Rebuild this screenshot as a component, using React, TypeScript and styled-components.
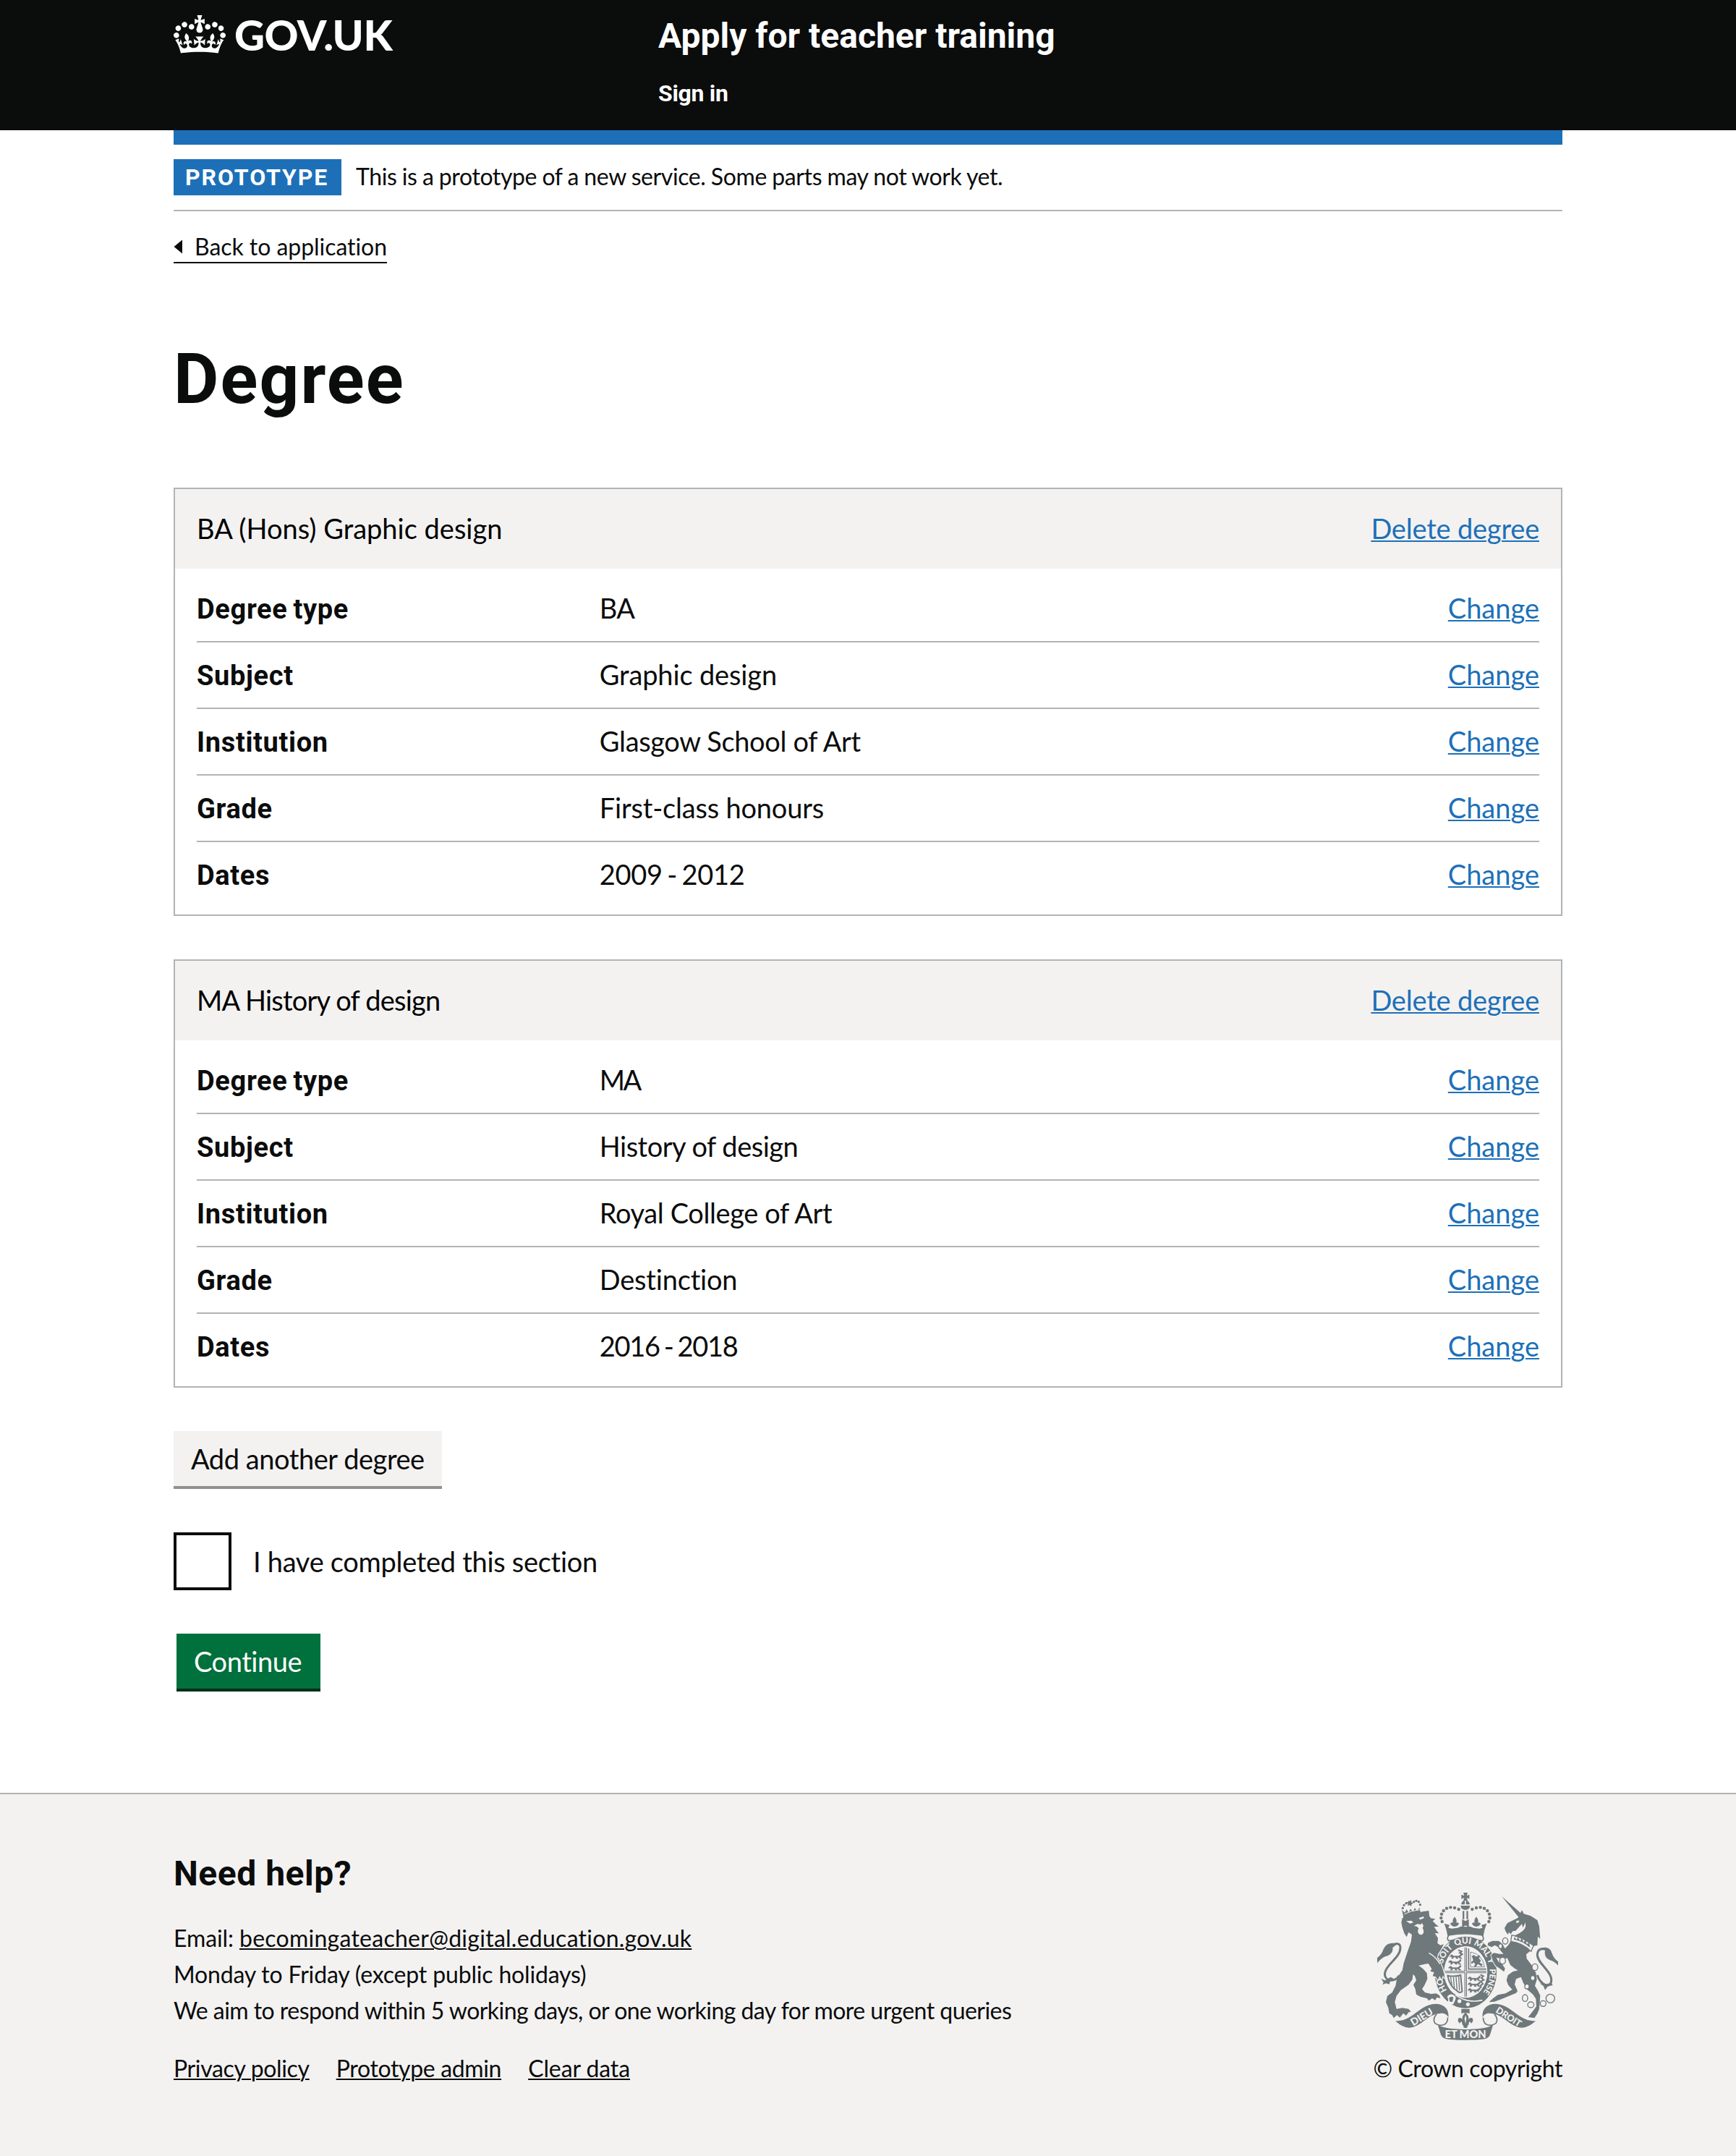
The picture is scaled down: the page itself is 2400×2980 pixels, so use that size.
import React from 'react';
import styled, { createGlobalStyle } from 'styled-components';

const BLACK = '#0b0c0c';
const BLUE = '#1d70b8';
const BORDER = '#b1b4b6';
const LIGHT = '#f3f2f1';
const CREST = '#6f787a';

const BODY_FONT = 'Lato, "Open Sans", sans-serif';
const BOLD_FONT = 'Roboto, "Liberation Sans", sans-serif';

const GlobalStyle = createGlobalStyle`
  *, *::before, *::after { box-sizing: border-box; }
  body {
    margin: 0;
    background: #fff;
    color: ${BLACK};
    font-family: ${BODY_FONT};
    font-size: 38px;
    line-height: 50px;
    letter-spacing: -0.3px;
    font-variant-ligatures: none;
  }
  h1, h2, p, dl, dt, dd { margin: 0; }
`;

const Page = styled.div`
  display: flex;
  flex-direction: column;
  min-height: 2980px;
`;

const Container = styled.div`
  width: 1920px;
  margin: 0 auto;
`;

const Tracked = styled.span<{ $track: number; $word?: number }>`
  letter-spacing: ${(p) => p.$track}px;
  word-spacing: ${(p) => p.$word ?? 0}px;
`;

/* Header */

const Header = styled.header`
  height: 180px;
  background: ${BLACK};
  color: #fff;
`;

const HeaderInner = styled(Container)`
  display: grid;
  grid-template-columns: 670px 1fr;
`;

const Logo = styled.a`
  display: flex;
  align-items: flex-start;
  gap: 12px;
  padding-top: 21px;
`;

const Wordmark = styled.span`
  margin-top: -2px;
  font-size: 58px;
  font-weight: 900;
  line-height: 58px;
  letter-spacing: -0.4px;
`;

const ServiceName = styled.div`
  margin-top: 20px;
  font: 700 48px/60px ${BOLD_FONT};
  letter-spacing: 0;
`;

const HeaderLink = styled.a`
  display: block;
  margin-top: 29px;
  font: 700 32px/40px ${BOLD_FONT};
  letter-spacing: -0.3px;
`;

const BlueBar = styled.div`
  height: 20px;
  background: ${BLUE};
`;

const PhaseBanner = styled.div`
  display: flex;
  align-items: flex-start;
  gap: 20px;
  height: 92px;
  padding: 20px 0;
  border-bottom: 2px solid ${BORDER};
`;

const Tag = styled.strong`
  width: 232px;
  height: 50px;
  padding-left: 16px;
  background: ${BLUE};
  color: #fff;
  font: 700 32px/50px ${BOLD_FONT};
  letter-spacing: 1.9px;
`;

const PhaseText = styled.span`
  font-size: 32px;
  line-height: 48px;
  letter-spacing: -0.4px;
  word-spacing: -0.4px;
`;

const BackLink = styled.a`
  display: flex;
  align-items: center;
  gap: 15px;
  width: 295px;
  height: 44px;
  margin-top: 28px;
  border-bottom: 2px solid ${BLACK};
  font-size: 32px;
  line-height: 40px;
  letter-spacing: -0.05px;
  white-space: nowrap;
`;

/* Main */

const Heading = styled.h1`
  margin: 110px 0 100px;
  font: 700 96px/100px ${BOLD_FONT};
  letter-spacing: 2.1px;
`;

const Card = styled.section`
  margin-bottom: 60px;
  border: 2px solid ${BORDER};
`;

const CardHeader = styled.header`
  display: flex;
  justify-content: space-between;
  height: 110px;
  padding: 29px 30px 0;
  background: ${LIGHT};
  color: #000;
`;

const Rows = styled.dl`
  padding: 10px 30px;
`;

const Row = styled.div`
  display: grid;
  grid-template-columns: 30% 50% 20%;
  align-items: baseline;
  height: 92px;
  padding-top: 19px;
  border-bottom: 2px solid ${BORDER};

  &:last-child {
    height: 90px;
    border-bottom: 0;
  }
`;

const Key = styled.dt`
  font-family: ${BOLD_FONT};
  font-weight: 700;
  letter-spacing: 0.65px;
  word-spacing: -2px;
`;

const Actions = styled.dd`
  text-align: right;
`;

const Link = styled.a<{ $track?: number; $dark?: boolean }>`
  color: ${(p) => (p.$dark ? BLACK : BLUE)};
  letter-spacing: ${(p) => p.$track ?? 0}px;
  text-decoration: underline;
  text-decoration-thickness: 2.4px;
  text-underline-offset: 2px;
`;

const Button = styled.button<{ $primary?: boolean }>`
  display: block;
  width: ${(p) => (p.$primary ? 199 : 371)}px;
  height: 76px;
  margin: 0 0 0 ${(p) => (p.$primary ? 4 : 0)}px;
  padding: 15px 0 15px 24px;
  border: 0;
  background: ${(p) => (p.$primary ? '#00703c' : LIGHT)};
  box-shadow: 0 4px 0 ${(p) => (p.$primary ? '#002d18' : '#929191')};
  color: ${(p) => (p.$primary ? '#fff' : BLACK)};
  font: 400 38px/46px ${BODY_FONT};
  letter-spacing: -0.45px;
  text-align: left;
  white-space: nowrap;
`;

const CheckboxRow = styled.label`
  display: flex;
  gap: 30px;
  margin: 64px 0 60px;
  letter-spacing: -0.3px;
`;

const Checkbox = styled.input`
  appearance: none;
  width: 80px;
  height: 80px;
  margin: 0;
  border: 4px solid ${BLACK};
  background: #fff;
`;

const CheckboxText = styled.span`
  padding-top: 15px;
`;

/* Footer */

const Footer = styled.footer`
  flex: 1;
  margin-top: 144px;
  padding-top: 80px;
  border-top: 2px solid ${BORDER};
  background: ${LIGHT};
  font-size: 32px;
`;

const FooterInner = styled(Container)`
  display: flex;
  justify-content: space-between;
  align-items: flex-end;
`;

const HelpTitle = styled.h2`
  margin-bottom: 34px;
  font: 700 48px/60px ${BOLD_FONT};
  letter-spacing: 0.5px;
`;

const HelpLine = styled.p<{ $track: number }>`
  letter-spacing: ${(p) => p.$track}px;
`;

const FooterLinks = styled.nav`
  display: flex;
  gap: 37px;
  margin-top: 30px;
`;

const Copyright = styled.div`
  display: flex;
  flex-direction: column;
  align-items: center;
  gap: 14px;
`;

/* Drawings */

const Crown = () => (
  <svg width="72" height="53" viewBox="0 0 132 97" fill="#fff" aria-hidden="true">
    <path
      fillRule="evenodd"
      d="M25 30.2c3.5 1.5 7.7-.2 9.1-3.7 1.5-3.6-.2-7.8-3.9-9.2-3.6-1.4-7.6.3-9.1 3.9-1.4 3.5.3 7.5 3.9 9zM9 39.5c3.6 1.5 7.8-.2 9.2-3.7 1.5-3.6-.2-7.8-3.9-9.1-3.6-1.5-7.6.2-9.1 3.8-1.4 3.5.3 7.5 3.8 9zM4.4 57.2c3.5 1.5 7.7-.2 9.1-3.8 1.5-3.6-.2-7.7-3.9-9.1-3.5-1.5-7.6.3-9.1 3.8-1.4 3.5.3 7.6 3.9 9.1zm38.3-21.4c3.5 1.5 7.7-.2 9.1-3.8 1.5-3.6-.2-7.7-3.9-9.1-3.6-1.5-7.6.3-9.1 3.8-1.3 3.6.4 7.7 3.9 9.1zm64.4-5.6c-3.6 1.5-7.8-.2-9.1-3.7-1.5-3.6.2-7.8 3.8-9.2 3.6-1.4 7.7.3 9.2 3.9 1.3 3.5-.4 7.5-3.9 9zm15.9 9.3c-3.6 1.5-7.7-.2-9.1-3.7-1.5-3.6.2-7.8 3.7-9.1 3.6-1.5 7.7.2 9.2 3.8 1.5 3.5-.3 7.5-3.8 9zm4.7 17.7c-3.6 1.5-7.8-.2-9.2-3.8-1.5-3.6.2-7.7 3.9-9.1 3.6-1.5 7.7.3 9.2 3.8 1.3 3.5-.4 7.6-3.9 9.1zM89.3 35.8c-3.6 1.5-7.8-.2-9.2-3.8-1.4-3.6.2-7.7 3.9-9.1 3.6-1.5 7.7.3 9.2 3.8 1.4 3.6-.3 7.7-3.9 9.1zM69.7 17.7l8.9 4.7V9.3l-8.9 2.8c-.2-.3-.5-.6-.9-.9L72.4 0H59.6l3.5 11.2c-.3.3-.6.5-.9.9l-8.8-2.8v13.1l8.8-4.7c.3.3.6.7.9.9l-5 15.4v.1c-.2.8-.4 1.6-.4 2.4 0 4.1 3.1 7.5 7 8.1h.2c.3 0 .7.1 1 .1.4 0 .7 0 1-.1h.2c4-.6 7.1-4.1 7.1-8.1 0-.8-.1-1.7-.4-2.4V34l-5.1-15.4c.4-.2.7-.6 1-.9zM66 92.8c16.9 0 32.8 1.1 47.1 3.2 4-16.9 8.9-26.7 14-33.5l-9.6-3.4c1 4.9 1.1 7.2 0 10.2-1.5-1.4-3-4.3-4.2-8.7L108.6 76c2.8-2 5-3.2 7.5-3.3-4.4 9.4-10 11.9-13.6 11.2-4.3-.8-6.3-4.6-5.6-7.9 1-4.7 5.7-5.9 8-.5 4.3-8.7-3-11.4-7.6-8.8 7.1-7.2 7.9-13.5 2.1-21.1-8 6.1-8.1 12.3-4.5 20.8-4.7-5.4-12.1-2.5-9.5 6.2 3.4-5.2 7.9-2 7.2 3.1-.6 4.3-6.4 7.8-13.5 7.2-10.3-.9-10.9-8-11.2-13.8 2.5-.5 7.1 1.8 11 7.3L80.2 60c-4.1 4.4-8 5.3-12.3 5.4 1.4-4.4 8-11.6 8-11.6H55.5s6.4 7.2 7.9 11.6c-4.2-.1-8-1-12.3-5.4l1.4 16.4c3.9-5.5 8.5-7.7 10.9-7.3-.3 5.8-.9 12.8-11.1 13.8-7.2.6-12.9-2.9-13.5-7.2-.7-5 3.8-8.3 7.1-3.1 2.7-8.7-4.6-11.6-9.4-6.2 3.7-8.5 3.6-14.7-4.6-20.8-5.8 7.6-5 13.9 2.2 21.1-4.7-2.6-11.9.1-7.7 8.8 2.3-5.5 7.1-4.2 8.1.5.7 3.3-1.3 7.1-5.7 7.9-3.5.7-9-1.8-13.5-11.2 2.5.1 4.7 1.3 7.5 3.3l-4.7-15.4c-1.2 4.4-2.7 7.2-4.3 8.7-1.1-3-.9-5.3 0-10.2l-9.5 3.4c5 6.9 9.9 16.7 14 33.5 14.8-2.1 30.8-3.2 47.7-3.2z"
    />
  </svg>
);

const BackArrow = () => (
  <svg width="14" height="20" viewBox="0 0 14 20" fill={BLACK} aria-hidden="true">
    <path d="M0.500 10 12 0.500V19.500z" />
  </svg>
);

const Lion = ({ x, y }: { x: number; y: number }) => (
  <path
    transform={`translate(${x} ${y})`}
    d="M0 8 5 2l7 0 3 5h22l8-5 3-5 4 2-2 6-6 4 2 5 6 3h-9l-5-6h-5l2 6h-7l-3-6h-8l-3 6H8l2-5-3-4-5 2z"
    stroke={CREST}
    strokeWidth="2"
  />
);

const PEARLS: [number, number][] = [
  [470, 177], [453, 171], [436, 169], [420, 173], [407, 183], [399, 197], [397, 213], [401, 228],
];

const HalfCrown = () => (
  <>
    {PEARLS.map(([x, y]) => <circle key={`${x}-${y}`} cx={x} cy={y} r="6.6" />)}
    <path d="M453 208q11 14 7 25 8-4 11 4-5 10-18 12-13-2-18-12 3-8 11-4-4-11 7-25z" />
    <path d="M410 236l22 6-5 12 14 3 24-3 14-6 20 2v26q-41 0-75 12-4-28-14-52z" />
  </>
);

const Ribbon = () => (
  <>
    <path d="M207 640q35 2 68-21c28-20 60-50 98-50 40 0 58 26 54 56-6-14-22-20-42-15-46 6-76 58-122 58q-28-2-56-28z" />
    <path d="M378 612q-18 20-6 38 20 14 40 4 14-10 12-28" fill="none" stroke={CREST} strokeWidth="5" />
    <path d="M382 652q14 22 117 23v44q-63 0-86-6-13-4-17-16z" />
  </>
);

const RoyalArms = () => (
  <svg width="250" height="204" viewBox="132 108 750 612" fill={CREST} role="img" aria-label="Royal coat of arms">
    <defs>
      <path id="garter" d="M499 557a100 119 0 0 1 0-238a100 119 0 0 1 0 238" />
      <clipPath id="shield"><ellipse cx="499" cy="437" rx="86" ry="102" /></clipPath>
    </defs>

    {/* crown */}
    <path d="M489 108h18l-4 13 11-5v18l-11-5 4 12h-18l4-12-12 5v-18l12 5zM480 157q3-16 15-17v17zM500 140q14 2 16 17h-16zM478 162h39q0 16-19 18-20-2-20-18z" />
    <path d="M486 184h7v34h-7zM502 184h7v34h-7z" />
    <path d="M484 218l14 8 14-8v34l-14-8-14 8z" />
    <HalfCrown />
    <g transform="translate(996 0) scale(-1 1)"><HalfCrown /></g>
    <path d="M430 284q68-12 136 0 12 12 2 24-70-16-140 0-10-12 2-24z" fill={LIGHT} stroke={CREST} strokeWidth="5" />

    {/* garter */}
    <path fillRule="evenodd" d="M499 290a128 148 0 0 1 0 297a128 148 0 0 1 0-297zM499 330a90 107 0 0 0 0 214a90 107 0 0 0 0-214z" />
    <g fill={LIGHT} fontFamily="Lato, sans-serif" fontWeight="900" fontSize="36" letterSpacing="-0.500" textAnchor="middle">
      <text><textPath href="#garter" startOffset="17.500%">HO</textPath></text>
      <text><textPath href="#garter" startOffset="36%">SOIT</textPath></text>
      <text><textPath href="#garter" startOffset="48.300%">QUI</textPath></text>
      <text><textPath href="#garter" startOffset="60.200%">MAL</textPath></text>
      <text><textPath href="#garter" startOffset="68.500%">Y</textPath></text>
      <text fontSize="34"><textPath href="#garter" startOffset="80.500%">PENSE</textPath></text>
    </g>
    <path d="M422 540q10-16 26-8 14 8 8 20l-8 18q-18 6-24-8 6-10-2-22z" fill={LIGHT} />
    <path d="M430 544q12-10 18 0l-4 16q-10 4-12-4z" />
    <circle cx="473" cy="558" r="8" fill={LIGHT} />
    <circle cx="508" cy="571" r="8" fill={LIGHT} />
    <path d="M456 532q50 36 112 22" fill="none" stroke={LIGHT} strokeWidth="5" />

    {/* shield */}
    <g clipPath="url(#shield)">
      <Lion x={432} y={364} /><Lion x={428} y={388} /><Lion x={428} y={412} />
      <Lion x={508} y={456} /><Lion x={508} y={480} /><Lion x={508} y={504} />
      <path d="M560 448l12 6-8 8 10 8-12 6 8 10-10 8 4 10M468 346l14 6-8 6 14 6" fill="none" stroke={CREST} strokeWidth="6" />
      <path d="M511 340v85h76" fill="none" stroke={CREST} strokeWidth="5" />
      <path d="M519 354q50 10 58 62h-58z" fill="none" stroke={CREST} strokeWidth="2.500" />
      <path d="M524 372l8-6 8 6 9 0 4-6 6 6-5 8 8 10-5 8 12 8-4 8-12-8-6 0-4 8-10 0 5-9-5-8-8 6-4-6 9-8-2-8z" />
      <path d="M424 452q30 6 54-2l6 68q-10 8-20-2-32-18-40-64z" fill="none" stroke={CREST} strokeWidth="6" />
      <path d="M436 458l6 34M448 459l4 46M459 458l4 54M470 456l3 58" fill="none" stroke={CREST} strokeWidth="4" />
      <path d="M499 330v214M406 437h186" stroke={CREST} strokeWidth="10" />
      <path d="M499 330v214M406 437h186" stroke={LIGHT} strokeWidth="3" />
    </g>

    {/* lion */}
    <g stroke={LIGHT} strokeWidth="7" strokeLinejoin="round" paintOrder="stroke">
      <path d="M232 232L236 214 268 200 322 186 346 183 348 204 354 214 373 217 362 226 376 240 387 248 368 250 380 268 388 277 371 276 384 296 382 318 394 326 408 322 396 344 384 362 380 378 392 396 402 420 410 446 412 462 404 452 400 468 390 454 384 470 374 456 362 454 368 438 352 434 358 424 344 402 330 404 304 410 322 424 338 442 340 466 328 492 318 508 330 522 356 528 376 526 390 534 394 546 380 542 372 554 360 546 346 556 338 546 312 540 294 530 290 508 282 490 294 472 288 454 280 447 278 468 262 490 230 512 212 536 205 562 212 590 236 586 262 590 272 602 262 604 252 618 240 608 226 626 214 616 200 628 194 616 182 608 178 586 168 562 174 536 194 522 208 494 214 462 236 430 242 400 258 352 272 312 276 282 262 272 254 292 244 276 236 252z" />
    </g>
    <path d="M252 226l22-2 8 8-14 4zM304 214l20-8 2 8-16 6zM284 246l14-8 14 2 6-6 6 12-4 8q8 14 2 24-8 8-16 2-10-8-2-24l-8-8z" fill={LIGHT} />
    <path d="M346 358q30 16 46 46" fill="none" stroke={LIGHT} strokeWidth="4" />
    <path d="M240 205l-6-26 12 12 8-14 8 14 8-16 10 12 8-16 8 12 12-12 4 22q-34 2-72 22zM260 140l6 4 6-6 2 10 8 4-8 4 0 8-8-4-8 2 2-8-6-6 8-2z" />
    {[[238, 172], [243, 160], [252, 152], [284, 146], [294, 142], [304, 146], [310, 158]].map(([x, y]) => (
      <circle key={x} cx={x} cy={y} r="5" />
    ))}
    <path d="M244 197q30-16 66-18" fill="none" stroke={LIGHT} strokeWidth="3" />
    <path d="M222 452c-16 32-64 22-58-12 6-36 64-62 64-104 0-20-18-20-36-8" fill="none" stroke={CREST} strokeWidth="9" />
    <path d="M216 320q-44-10-58 22-8 24-26 36v22q20-26 44-30 24-12 20-34zM148 464l16 8 24-14 14 8-16 8-4 14-14-4-14 6 4-10z" />

    {/* unicorn */}
    <path d="M648 123l86 76-16 10z" />
    <path d="M716 212l16-32 8 16 28 8 28 18 8 26 4 52-10-10-2 36-16 4-80-46 26-10 10-22-4-14-26 28-12 2-8 12-8-8-4 10-10-14-4-14 12-20z" />
    <path d="M710 224l12 0-4 8-10 2z" fill={LIGHT} />
    <path d="M746 232q6 22-10 34t-30 18l-6-2q36-16 46-50z" fill={LIGHT} />
    <g stroke={LIGHT} strokeWidth="6" strokeLinejoin="round" paintOrder="stroke">
      <path d="M688 305L676 325 662 340 652 322 636 308 610 308 592 316 590 326 606 334 620 326 634 334 646 352 656 362 640 362 616 358 604 366 612 392 624 412 642 424 658 436 662 422 650 404 636 396 626 378 650 382 672 380 684 408 704 424 716 430 694 436 674 450 668 472 676 492 692 510 664 526 632 532 610 548 596 562 618 560 650 548 708 524 714 516 702 488 708 466 728 458 738 482 752 508 778 530 790 548 792 580 774 604 758 624 784 628 796 610 804 590 808 535 798 514 786 494 794 468 790 440 772 408 752 382 750 364 766 350 772 338z" />
    </g>
    <path d="M690 284q50 12 90 44l-10 24q-34-36-84-42z" fill={LIGHT} stroke={CREST} strokeWidth="4" />
    <path d="M698 302l4-10 8 12 6-12 8 16 8-12 6 18 10-10 4 18 10-8 4 22q-32-28-68-34z" />
    <g fill={LIGHT} stroke={CREST} strokeWidth="4">
      <ellipse cx="663" cy="308" rx="11" ry="13" />
      <ellipse cx="643" cy="330" rx="8" ry="10" />
      <ellipse cx="652" cy="390" rx="12" ry="14" />
      <ellipse cx="786" cy="417" rx="12" ry="14" />
      <ellipse cx="777" cy="462" rx="9" ry="10" />
      <ellipse cx="753" cy="497" rx="9" ry="10" />
      <ellipse cx="745" cy="545" rx="11" ry="14" />
      <ellipse cx="769" cy="573" rx="13" ry="12" />
      <ellipse cx="820" cy="568" rx="12" ry="12" />
      <circle cx="850" cy="547" r="18" />
    </g>
    <path d="M796 450c12 38 54 60 58 24 4-40-60-74-58-110 2-24 20-26 36-20" fill="none" stroke={CREST} strokeWidth="9" />
    <path d="M810 338q38-10 46 20 8 24 26 36v16q-16-18-34-22-26-10-20-42zM806 484l20 4 28-6 6 10-20 4-12 16-6-16z" />

    {/* motto */}
    <Ribbon />
    <g transform="translate(996 0) scale(-1 1)"><Ribbon /></g>
    <path d="M481 590h34v20q-18-10-34 0zM498 602l12 18 2 14q4-10 14-6 8 12-4 22l-6-8q-6 4-4 12l-6 6q4 8-8 10-12-2-8-10l-6-6q2-8-4-12l-6 8q-12-10-4-22 10-4 14 6l2-14z" />
    <path d="M498 616l4 14-4 22-4-22z" fill={LIGHT} />
    <g fill={LIGHT} fontFamily="Lato, sans-serif" fontWeight="900" textAnchor="middle">
      <text fontSize="42" transform="translate(324 636) rotate(-31)">DIEU</text>
      <text fontSize="44" x="498" y="711">ET MON</text>
      <text fontSize="38" transform="translate(670 634) rotate(33)">DROIT</text>
    </g>
  </svg>
);

type Entry = { key: string; value: string; track: number; word?: number };
type Degree = { title: string; track: number; entries: Entry[] };

const degrees: Degree[] = [
  {
    title: 'BA (Hons) Graphic design',
    track: 0,
    entries: [
      { key: 'Degree type', value: 'BA', track: -0.8 },
      { key: 'Subject', value: 'Graphic design', track: -0.15 },
      { key: 'Institution', value: 'Glasgow School of Art', track: -0.35 },
      { key: 'Grade', value: 'First-class honours', track: -0.2 },
      { key: 'Dates', value: '2009 - 2012', track: -0.3, word: -3 },
    ],
  },
  {
    title: 'MA History of design',
    track: -0.8,
    entries: [
      { key: 'Degree type', value: 'MA', track: -2.5 },
      { key: 'Subject', value: 'History of design', track: -0.5 },
      { key: 'Institution', value: 'Royal College of Art', track: -0.4 },
      { key: 'Grade', value: 'Destinction', track: -0.2 },
      { key: 'Dates', value: '2016 - 2018', track: -1.3, word: -2.5 },
    ],
  },
];

export default function App() {
  return (
    <Page>
      <GlobalStyle />
      <Header>
        <HeaderInner>
          <Logo>
            <Crown />
            <Wordmark>GOV.UK</Wordmark>
          </Logo>
          <div>
            <ServiceName>Apply for teacher training</ServiceName>
            <HeaderLink>Sign in</HeaderLink>
          </div>
        </HeaderInner>
      </Header>

      <Container>
        <BlueBar />
        <PhaseBanner>
          <Tag>PROTOTYPE</Tag>
          <PhaseText>This is a prototype of a new service. Some parts may not work yet.</PhaseText>
        </PhaseBanner>
        <BackLink>
          <BackArrow />
          Back to application
        </BackLink>

        <main>
          <Heading>Degree</Heading>
          {degrees.map((degree) => (
            <Card key={degree.title}>
              <CardHeader>
                <Tracked $track={degree.track}>{degree.title}</Tracked>
                <Link $track={-0.2}>Delete degree</Link>
              </CardHeader>
              <Rows>
                {degree.entries.map((entry) => (
                  <Row key={entry.key}>
                    <Key>{entry.key}</Key>
                    <dd><Tracked $track={entry.track} $word={entry.word}>{entry.value}</Tracked></dd>
                    <Actions><Link>Change</Link></Actions>
                  </Row>
                ))}
              </Rows>
            </Card>
          ))}
          <Button>Add another degree</Button>
          <CheckboxRow>
            <Checkbox type="checkbox" />
            <CheckboxText>I have completed this section</CheckboxText>
          </CheckboxRow>
          <Button $primary>Continue</Button>
        </main>
      </Container>

      <Footer>
        <FooterInner>
          <div>
            <HelpTitle>Need help?</HelpTitle>
            <HelpLine $track={-0.1}>
              Email: <Link $dark $track={0.26}>becomingateacher@digital.education.gov.uk</Link>
            </HelpLine>
            <HelpLine $track={-0.17}>Monday to Friday (except public holidays)</HelpLine>
            <HelpLine $track={-0.54}>
              We aim to respond within 5 working days, or one working day for more urgent queries
            </HelpLine>
            <FooterLinks>
              <Link $dark $track={-0.35}>Privacy policy</Link>
              <Link $dark $track={-0.35}>Prototype admin</Link>
              <Link $dark $track={-0.1}>Clear data</Link>
            </FooterLinks>
          </div>
          <Copyright>
            <RoyalArms />
            <Tracked $track={-0.4}>© Crown copyright</Tracked>
          </Copyright>
        </FooterInner>
      </Footer>
    </Page>
  );
}
